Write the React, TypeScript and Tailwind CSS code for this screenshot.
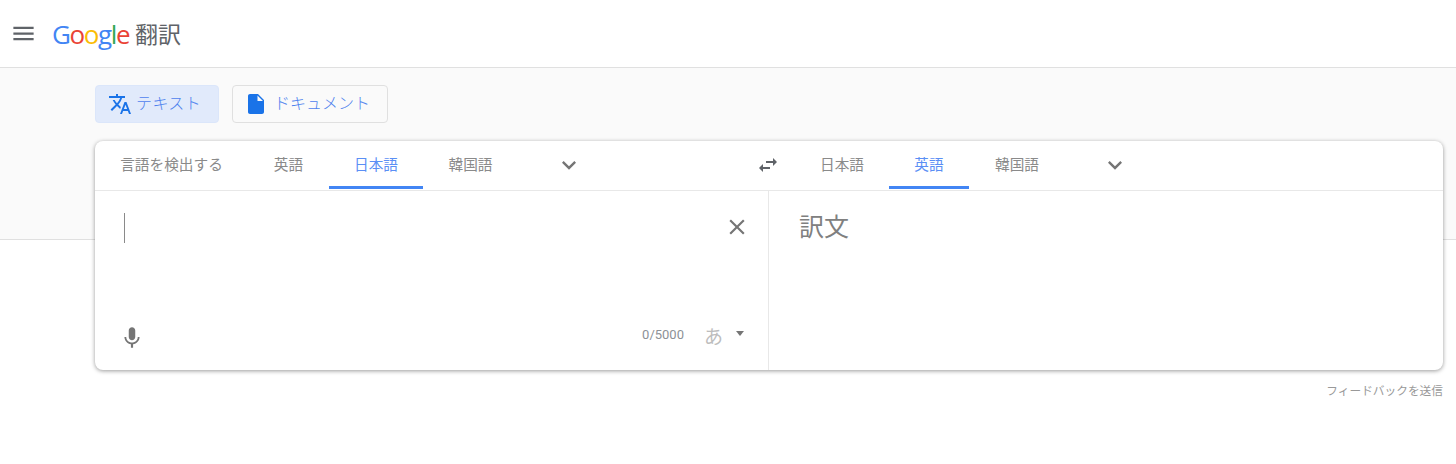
const jp = "font-['Noto_Sans_CJK_JP','Roboto',sans-serif]";

function Icon({ d, className }: { d: string; className: string }) {
  return (
    <svg viewBox="0 0 24 24" fill="currentColor" className={className}>
      <path d={d} />
    </svg>
  );
}

const P = {
  menu: "M3 18h18v-2H3v2zm0-5h18v-2H3v2zm0-7v2h18V6H3z",
  translate:
    "M12.87 15.07l-2.54-2.51.03-.03c1.74-1.94 2.98-4.17 3.71-6.53H17V4h-7V2H8v2H1v1.99h11.17C11.5 7.92 10.44 9.75 9 11.35 8.07 10.32 7.3 9.19 6.69 8h-2c.73 1.63 1.73 3.17 2.98 4.56l-5.09 5.02L4 19l5-5 3.11 3.11.76-2.04zM18.5 10h-2L12 22h2l1.12-3h4.75L21 22h2l-4.5-12zm-2.62 7l1.62-4.33L19.12 17h-3.24z",
  doc: "M14 2H6c-1.1 0-1.99.9-1.99 2L4 20c0 1.1.89 2 1.99 2H18c1.1 0 2-.9 2-2V8l-6-6zm-.5 7V3.5L19 9h-5.5z",
  chevron: "M7.41 8.59L12 13.17l4.59-4.58L18 10l-6 6-6-6 1.41-1.41z",
  swap: "M6.99 11L3 15l3.99 4v-3H14v-2H6.99v-3zM21 9l-3.99-4v3H10v2h7.01v3L21 9z",
  close:
    "M19 6.41L17.59 5 12 10.59 6.41 5 5 6.41 10.59 12 5 17.59 6.41 19 12 13.41 17.59 19 19 17.59 13.41 12z",
  mic: "M12 14c1.66 0 2.99-1.34 2.99-3L15 5c0-1.66-1.34-3-3-3S9 3.34 9 5v6c0 1.66 1.34 3 3 3zm5.3-3c0 3-2.54 5.1-5.3 5.1S6.7 14 6.7 11H5c0 3.41 2.72 6.23 6 6.72V21h2v-3.28c3.28-.48 6-3.3 6-6.72h-1.7z",
};

function Tab({ label, active, w }: { label: string; active?: boolean; w: string }) {
  return (
    <div
      className={`${w} h-[48px] flex items-center justify-center text-[14.67px] border-b-[3px] ${
        active ? "text-[#5b8ff5] border-[#4285f4]" : "text-[#8a8a8a] border-transparent"
      }`}
    >
      {label}
    </div>
  );
}

export default function App() {
  return (
    <div className={`${jp} h-[464px] w-[1456px] overflow-hidden bg-white`}>
      <header className="h-[68px] border-b border-[#e0e0e0] flex items-center pl-[10px]">
        <Icon d={P.menu} className="w-[27px] h-[27px] text-[#5f6368]" />
        <div className="ml-[16px] flex items-center leading-none">
          <span className="inline-block font-['Open_Sans',sans-serif] text-[26px] font-medium tracking-[-1.4px] w-[78px] leading-[34px] -ml-[1px] mr-[1px]">
            <span className="text-[#4285f4]">G</span>
            <span className="text-[#ea4335]">o</span>
            <span className="text-[#fbbc05]">o</span>
            <span className="text-[#4285f4]">g</span>
            <span className="text-[#34a853]">l</span>
            <span className="text-[#ea4335]">e</span>
          </span>
          <span className="ml-[4px] text-[23px] text-[#5f6368]">翻訳</span>
        </div>
      </header>

      <div className="h-[172px] bg-[#fafafa] border-b border-[#e0e0e0] pl-[95px] pr-[13px] pt-[17px]">
        <div className="flex gap-[13px]">
          <div className="w-[124px] h-[38px] rounded-[4px] bg-[#e1eafb] border border-[#dbe6fa] flex items-center pl-[12px] text-[#4f82ee]">
            <Icon d={P.translate} className="w-[24px] h-[24px] text-[#1a73e8]" />
            <span className="ml-[4px] mb-[4px] text-[16px] font-light tracking-[0.4px]">テキスト</span>
          </div>
          <div className="w-[156px] h-[38px] rounded-[4px] bg-[#fafafa] border border-[#e0e0e0] flex items-center pl-[11px] text-[#4f82ee]">
            <Icon d={P.doc} className="w-[24px] h-[24px] text-[#1a73e8]" />
            <span className="ml-[6px] mb-[4px] text-[16px] font-light">ドキュメント</span>
          </div>
        </div>

        <main className="mt-[18px] h-[229px] w-[1348px] rounded-[8px] bg-white shadow-[0_1px_4px_rgba(0,0,0,0.4)] flex flex-col">
          <div className="h-[50px] border-b border-[#e8e8e8] flex items-start">
            <div className="w-[661px] flex items-center">
              <Tab label="言語を検出する" w="w-[153px]" />
              <Tab label="英語" w="w-[81px]" />
              <Tab label="日本語" active w="w-[94px]" />
              <Tab label="韓国語" w="w-[95px]" />
              <Icon d={P.chevron} className="ml-[37px] w-[28px] h-[28px] text-[#757575]" />
            </div>
            <div className="h-[48px] flex items-center">
              <Icon d={P.swap} className="w-[24px] h-[24px] text-[#5f6368]" />
            </div>
            <div className="flex items-center ml-[15px]">
              <Tab label="日本語" w="w-[94px]" />
              <Tab label="英語" active w="w-[80px]" />
              <Tab label="韓国語" w="w-[96px]" />
              <Icon d={P.chevron} className="ml-[36px] w-[28px] h-[28px] text-[#757575]" />
            </div>
          </div>

          <div className="flex-1 flex">
            <div className="w-[674px] border-r border-[#e8e8e8] flex flex-col pl-[29px] pr-[18px] pt-[22px] pb-[19px]">
              <div className="flex justify-between items-start">
                <div className="w-[1px] h-[30px] bg-[#8a8a8a]" />
                <Icon d={P.close} className="w-[26px] h-[26px] text-[#757575] mt-[1px]" />
              </div>
              <div className="mt-auto flex items-center -ml-[5px]">
                <Icon d={P.mic} className="w-[26px] h-[26px] text-[#757575]" />
                <span className="ml-auto font-['Roboto',sans-serif] text-[13px] text-[#8d9196] mr-[1px] mb-[6px]">0/5000</span>
                <span className="ml-[19px] text-[19px] leading-none text-[#bdbdbd] mb-[6px]">あ</span>
                <div className="ml-[13px] mr-[6px] mb-[10px] w-0 h-0 border-x-[4.5px] border-x-transparent border-t-[5px] border-t-[#757575]" />
              </div>
            </div>
            <div className="flex-1 pl-[30px] pt-[14px] text-[25px] leading-[40px] text-[#808080]">訳文</div>
          </div>
        </main>

        <div className="mt-[11px] text-right text-[11.7px] leading-[18px] text-[#999999]">フィードバックを送信</div>
      </div>
    </div>
  );
}
